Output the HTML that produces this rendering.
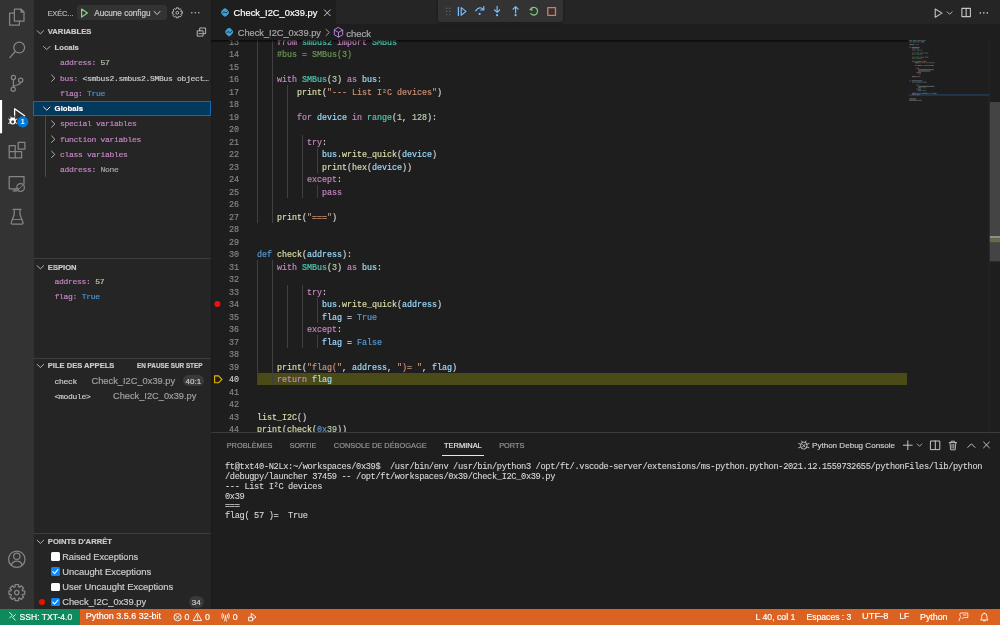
<!DOCTYPE html><html><head><meta charset="utf-8"><style>
*{margin:0;padding:0;box-sizing:border-box}
html,body{width:1000px;height:625px;overflow:hidden;background:#1e1e1e;font-family:"Liberation Sans",sans-serif;color:#ccc}
.a{position:absolute;white-space:pre;-webkit-text-stroke:0.18px currentColor}
.m{font-family:"Liberation Mono",monospace}
.k{color:#c586c0}.d{color:#569cd6}.f{color:#dcdcaa}.v{color:#9cdcfe}.c{color:#4ec9b0}.n{color:#b5cea8}.s{color:#ce9178}.cm{color:#6a9955}.p{color:#d4d4d4}
svg{position:absolute;overflow:visible}
</style></head><body><div id="w" style="position:absolute;left:0;top:0;width:1000px;height:625px;will-change:transform">
<div class="a" style="left:0px;top:0px;width:33.6px;height:609.3px;background:#333333;"></div>
<div class="a" style="left:33.6px;top:0px;width:177.5px;height:609.3px;background:#252526;"></div>
<div class="a" style="left:211.1px;top:0px;width:788.9px;height:24.3px;background:#252526;"></div>
<div class="a" style="left:211.1px;top:0px;width:125.4px;height:24.3px;background:#1e1e1e;"></div>
<div class="a" style="left:211.1px;top:24.3px;width:788.9px;height:15.3px;background:#1e1e1e;"></div>
<div class="a" style="left:211.1px;top:39.6px;width:788.9px;height:392.7px;background:#1e1e1e;"></div>
<div class="a" style="left:211.1px;top:431.8px;width:788.9px;height:1px;background:#3c3c3c;"></div>
<div class="a" style="left:211.3px;top:0px;width:1.2px;height:609.3px;background:rgba(0,0,0,0.12);z-index:4"></div>
<div class="a" style="left:211.1px;top:433.3px;width:788.9px;height:176px;background:#1e1e1e;"></div>
<div class="a" style="left:0px;top:609.3px;width:1000px;height:15.7px;background:#dc6222;"></div>
<div class="a" style="left:0px;top:609.3px;width:80.1px;height:15.7px;background:#0f8a5c;"></div>
<div class="a" style="left:438px;top:-2px;width:125.2px;height:24.1px;background:#333333;border-radius:0 0 3px 3px;box-shadow:0 1px 3px rgba(0,0,0,0.35);z-index:5"></div>
<div class="a" style="left:211.1px;top:39.6px;width:697px;height:392.7px;overflow:hidden">
<div class="a" style="left:45.900000000000006px;top:333.35px;width:649.7px;height:12.5px;background:#4b4b18"></div>
<div class="a" style="left:46.40px;top:-4.15px;width:1px;height:187.5px;background:#404040"></div>
<div class="a" style="left:61.40px;top:-4.15px;width:1px;height:187.5px;background:#404040"></div>
<div class="a" style="left:76.40px;top:45.85px;width:1px;height:112.5px;background:#404040"></div>
<div class="a" style="left:91.40px;top:95.85px;width:1px;height:62.5px;background:#404040"></div>
<div class="a" style="left:106.40px;top:108.35px;width:1px;height:25.0px;background:#404040"></div>
<div class="a" style="left:106.40px;top:145.85px;width:1px;height:12.5px;background:#404040"></div>
<div class="a" style="left:46.40px;top:220.85px;width:1px;height:125.0px;background:#404040"></div>
<div class="a" style="left:61.40px;top:220.85px;width:1px;height:125.0px;background:#404040"></div>
<div class="a" style="left:76.40px;top:245.85px;width:1px;height:62.5px;background:#404040"></div>
<div class="a" style="left:91.40px;top:245.85px;width:1px;height:62.5px;background:#404040"></div>
<div class="a" style="left:106.40px;top:258.35px;width:1px;height:25.0px;background:#404040"></div>
<div class="a" style="left:106.40px;top:295.85px;width:1px;height:12.5px;background:#404040"></div>
<div class="a m" style="left:7.900000000000006px;width:20px;text-align:right;top:-2.85px;height:12.5px;line-height:12.5px;font-size:8.33px;color:#858585">13</div>
<div class="a m" style="left:65.9px;top:-2.85px;height:12.5px;line-height:12.5px;font-size:8.33px"><span class="k">from</span><span class="p"> </span><span class="c">smbus2</span><span class="p"> </span><span class="k">import</span><span class="p"> </span><span class="c">SMBus</span></div>
<div class="a m" style="left:7.900000000000006px;width:20px;text-align:right;top:9.65px;height:12.5px;line-height:12.5px;font-size:8.33px;color:#858585">14</div>
<div class="a m" style="left:65.9px;top:9.65px;height:12.5px;line-height:12.5px;font-size:8.33px"><span class="cm">#bus = SMBus(3)</span></div>
<div class="a m" style="left:7.900000000000006px;width:20px;text-align:right;top:22.15px;height:12.5px;line-height:12.5px;font-size:8.33px;color:#858585">15</div>
<div class="a m" style="left:7.900000000000006px;width:20px;text-align:right;top:34.65px;height:12.5px;line-height:12.5px;font-size:8.33px;color:#858585">16</div>
<div class="a m" style="left:65.9px;top:34.65px;height:12.5px;line-height:12.5px;font-size:8.33px"><span class="k">with</span><span class="p"> </span><span class="c">SMBus</span><span class="p">(</span><span class="n">3</span><span class="p">) </span><span class="k">as</span><span class="p"> </span><span class="v">bus</span><span class="p">:</span></div>
<div class="a m" style="left:7.900000000000006px;width:20px;text-align:right;top:47.15px;height:12.5px;line-height:12.5px;font-size:8.33px;color:#858585">17</div>
<div class="a m" style="left:85.9px;top:47.15px;height:12.5px;line-height:12.5px;font-size:8.33px"><span class="f">print</span><span class="p">(</span><span class="s">&quot;--- List I²C devices&quot;</span><span class="p">)</span></div>
<div class="a m" style="left:7.900000000000006px;width:20px;text-align:right;top:59.65px;height:12.5px;line-height:12.5px;font-size:8.33px;color:#858585">18</div>
<div class="a m" style="left:7.900000000000006px;width:20px;text-align:right;top:72.15px;height:12.5px;line-height:12.5px;font-size:8.33px;color:#858585">19</div>
<div class="a m" style="left:85.9px;top:72.15px;height:12.5px;line-height:12.5px;font-size:8.33px"><span class="k">for</span><span class="p"> </span><span class="v">device</span><span class="p"> </span><span class="k">in</span><span class="p"> </span><span class="c">range</span><span class="p">(</span><span class="n">1</span><span class="p">, </span><span class="n">128</span><span class="p">):</span></div>
<div class="a m" style="left:7.900000000000006px;width:20px;text-align:right;top:84.65px;height:12.5px;line-height:12.5px;font-size:8.33px;color:#858585">20</div>
<div class="a m" style="left:7.900000000000006px;width:20px;text-align:right;top:97.15px;height:12.5px;line-height:12.5px;font-size:8.33px;color:#858585">21</div>
<div class="a m" style="left:95.9px;top:97.15px;height:12.5px;line-height:12.5px;font-size:8.33px"><span class="k">try</span><span class="p">:</span></div>
<div class="a m" style="left:7.900000000000006px;width:20px;text-align:right;top:109.65px;height:12.5px;line-height:12.5px;font-size:8.33px;color:#858585">22</div>
<div class="a m" style="left:110.9px;top:109.65px;height:12.5px;line-height:12.5px;font-size:8.33px"><span class="v">bus</span><span class="p">.</span><span class="f">write_quick</span><span class="p">(</span><span class="v">device</span><span class="p">)</span></div>
<div class="a m" style="left:7.900000000000006px;width:20px;text-align:right;top:122.15px;height:12.5px;line-height:12.5px;font-size:8.33px;color:#858585">23</div>
<div class="a m" style="left:110.9px;top:122.15px;height:12.5px;line-height:12.5px;font-size:8.33px"><span class="f">print</span><span class="p">(</span><span class="f">hex</span><span class="p">(</span><span class="v">device</span><span class="p">))</span></div>
<div class="a m" style="left:7.900000000000006px;width:20px;text-align:right;top:134.65px;height:12.5px;line-height:12.5px;font-size:8.33px;color:#858585">24</div>
<div class="a m" style="left:95.9px;top:134.65px;height:12.5px;line-height:12.5px;font-size:8.33px"><span class="k">except</span><span class="p">:</span></div>
<div class="a m" style="left:7.900000000000006px;width:20px;text-align:right;top:147.15px;height:12.5px;line-height:12.5px;font-size:8.33px;color:#858585">25</div>
<div class="a m" style="left:110.9px;top:147.15px;height:12.5px;line-height:12.5px;font-size:8.33px"><span class="k">pass</span></div>
<div class="a m" style="left:7.900000000000006px;width:20px;text-align:right;top:159.65px;height:12.5px;line-height:12.5px;font-size:8.33px;color:#858585">26</div>
<div class="a m" style="left:7.900000000000006px;width:20px;text-align:right;top:172.15px;height:12.5px;line-height:12.5px;font-size:8.33px;color:#858585">27</div>
<div class="a m" style="left:65.9px;top:172.15px;height:12.5px;line-height:12.5px;font-size:8.33px"><span class="f">print</span><span class="p">(</span><span class="s">&quot;===&quot;</span><span class="p">)</span></div>
<div class="a m" style="left:7.900000000000006px;width:20px;text-align:right;top:184.65px;height:12.5px;line-height:12.5px;font-size:8.33px;color:#858585">28</div>
<div class="a m" style="left:7.900000000000006px;width:20px;text-align:right;top:197.15px;height:12.5px;line-height:12.5px;font-size:8.33px;color:#858585">29</div>
<div class="a m" style="left:7.900000000000006px;width:20px;text-align:right;top:209.65px;height:12.5px;line-height:12.5px;font-size:8.33px;color:#858585">30</div>
<div class="a m" style="left:45.900000000000006px;top:209.65px;height:12.5px;line-height:12.5px;font-size:8.33px"><span class="d">def</span><span class="p"> </span><span class="f">check</span><span class="p">(</span><span class="v">address</span><span class="p">):</span></div>
<div class="a m" style="left:7.900000000000006px;width:20px;text-align:right;top:222.15px;height:12.5px;line-height:12.5px;font-size:8.33px;color:#858585">31</div>
<div class="a m" style="left:65.9px;top:222.15px;height:12.5px;line-height:12.5px;font-size:8.33px"><span class="k">with</span><span class="p"> </span><span class="c">SMBus</span><span class="p">(</span><span class="n">3</span><span class="p">) </span><span class="k">as</span><span class="p"> </span><span class="v">bus</span><span class="p">:</span></div>
<div class="a m" style="left:7.900000000000006px;width:20px;text-align:right;top:234.65px;height:12.5px;line-height:12.5px;font-size:8.33px;color:#858585">32</div>
<div class="a m" style="left:7.900000000000006px;width:20px;text-align:right;top:247.15px;height:12.5px;line-height:12.5px;font-size:8.33px;color:#858585">33</div>
<div class="a m" style="left:95.9px;top:247.15px;height:12.5px;line-height:12.5px;font-size:8.33px"><span class="k">try</span><span class="p">:</span></div>
<div class="a m" style="left:7.900000000000006px;width:20px;text-align:right;top:259.65px;height:12.5px;line-height:12.5px;font-size:8.33px;color:#858585">34</div>
<div class="a m" style="left:110.9px;top:259.65px;height:12.5px;line-height:12.5px;font-size:8.33px"><span class="v">bus</span><span class="p">.</span><span class="f">write_quick</span><span class="p">(</span><span class="v">address</span><span class="p">)</span></div>
<div class="a m" style="left:7.900000000000006px;width:20px;text-align:right;top:272.15px;height:12.5px;line-height:12.5px;font-size:8.33px;color:#858585">35</div>
<div class="a m" style="left:110.9px;top:272.15px;height:12.5px;line-height:12.5px;font-size:8.33px"><span class="v">flag</span><span class="p"> = </span><span class="d">True</span></div>
<div class="a m" style="left:7.900000000000006px;width:20px;text-align:right;top:284.65px;height:12.5px;line-height:12.5px;font-size:8.33px;color:#858585">36</div>
<div class="a m" style="left:95.9px;top:284.65px;height:12.5px;line-height:12.5px;font-size:8.33px"><span class="k">except</span><span class="p">:</span></div>
<div class="a m" style="left:7.900000000000006px;width:20px;text-align:right;top:297.15px;height:12.5px;line-height:12.5px;font-size:8.33px;color:#858585">37</div>
<div class="a m" style="left:110.9px;top:297.15px;height:12.5px;line-height:12.5px;font-size:8.33px"><span class="v">flag</span><span class="p"> = </span><span class="d">False</span></div>
<div class="a m" style="left:7.900000000000006px;width:20px;text-align:right;top:309.65px;height:12.5px;line-height:12.5px;font-size:8.33px;color:#858585">38</div>
<div class="a m" style="left:7.900000000000006px;width:20px;text-align:right;top:322.15px;height:12.5px;line-height:12.5px;font-size:8.33px;color:#858585">39</div>
<div class="a m" style="left:65.9px;top:322.15px;height:12.5px;line-height:12.5px;font-size:8.33px"><span class="f">print</span><span class="p">(</span><span class="s">&quot;flag(&quot;</span><span class="p">, </span><span class="v">address</span><span class="p">, </span><span class="s">&quot;)= &quot;</span><span class="p">, </span><span class="v">flag</span><span class="p">)</span></div>
<div class="a m" style="left:7.900000000000006px;width:20px;text-align:right;top:334.65px;height:12.5px;line-height:12.5px;font-size:8.33px;color:#c6c6c6">40</div>
<div class="a m" style="left:65.9px;top:334.65px;height:12.5px;line-height:12.5px;font-size:8.33px"><span class="k">return</span><span class="p"> </span><span class="v">flag</span></div>
<div class="a m" style="left:7.900000000000006px;width:20px;text-align:right;top:347.15px;height:12.5px;line-height:12.5px;font-size:8.33px;color:#858585">41</div>
<div class="a m" style="left:7.900000000000006px;width:20px;text-align:right;top:359.65px;height:12.5px;line-height:12.5px;font-size:8.33px;color:#858585">42</div>
<div class="a m" style="left:7.900000000000006px;width:20px;text-align:right;top:372.15px;height:12.5px;line-height:12.5px;font-size:8.33px;color:#858585">43</div>
<div class="a m" style="left:45.900000000000006px;top:372.15px;height:12.5px;line-height:12.5px;font-size:8.33px"><span class="f">list_I2C</span><span class="p">()</span></div>
<div class="a m" style="left:7.900000000000006px;width:20px;text-align:right;top:384.65px;height:12.5px;line-height:12.5px;font-size:8.33px;color:#858585">44</div>
<div class="a m" style="left:45.900000000000006px;top:384.65px;height:12.5px;line-height:12.5px;font-size:8.33px"><span class="f">print</span><span class="p">(</span><span class="f">check</span><span class="p">(</span><span class="d">0x</span><span class="n">39</span><span class="p">))</span></div>
</div>
<div class="a" style="left:211.1px;top:39.6px;width:697px;height:3px;background:linear-gradient(#000a,#0000);"></div>
<div class="a " style="left:226.7px;top:440.85px;height:10.30px;line-height:10.30px;font-size:7.36px;color:#969696;">PROBLÈMES</div>
<div class="a " style="left:289.7px;top:440.97px;height:10.05px;line-height:10.05px;font-size:7.18px;color:#969696;">SORTIE</div>
<div class="a " style="left:333.8px;top:440.82px;height:10.36px;line-height:10.36px;font-size:7.4px;color:#969696;">CONSOLE DE DÉBOGAGE</div>
<div class="a " style="left:444px;top:440.76px;height:10.47px;line-height:10.47px;font-size:7.48px;color:#e7e7e7;">TERMINAL</div>
<div class="a " style="left:499.2px;top:440.85px;height:10.30px;line-height:10.30px;font-size:7.36px;color:#969696;">PORTS</div>
<div class="a" style="left:442.2px;top:455.1px;width:42px;height:1px;background:#e7e7e7;"></div>
<div class="a m" style="left:225px;top:463.44px;height:9.72px;line-height:9.72px;font-size:8.7px;color:#d8d8d8;letter-spacing:-0.36px;-webkit-text-stroke:0.1px #d8d8d8">ft@txt40-N2Lx:~/workspaces/0x39$  /usr/bin/env /usr/bin/python3 /opt/ft/.vscode-server/extensions/ms-python.python-2021.12.1559732655/pythonFiles/lib/python</div>
<div class="a m" style="left:225px;top:473.16px;height:9.72px;line-height:9.72px;font-size:8.7px;color:#d8d8d8;letter-spacing:-0.36px;-webkit-text-stroke:0.1px #d8d8d8">/debugpy/launcher 37459 -- /opt/ft/workspaces/0x39/Check_I2C_0x39.py</div>
<div class="a m" style="left:225px;top:482.88px;height:9.72px;line-height:9.72px;font-size:8.7px;color:#d8d8d8;letter-spacing:-0.36px;-webkit-text-stroke:0.1px #d8d8d8">--- List I²C devices</div>
<div class="a m" style="left:225px;top:492.60px;height:9.72px;line-height:9.72px;font-size:8.7px;color:#d8d8d8;letter-spacing:-0.36px;-webkit-text-stroke:0.1px #d8d8d8">0x39</div>
<div class="a m" style="left:225px;top:502.32px;height:9.72px;line-height:9.72px;font-size:8.7px;color:#d8d8d8;letter-spacing:-0.36px;-webkit-text-stroke:0.1px #d8d8d8">===</div>
<div class="a m" style="left:225px;top:512.04px;height:9.72px;line-height:9.72px;font-size:8.7px;color:#d8d8d8;letter-spacing:-0.36px;-webkit-text-stroke:0.1px #d8d8d8">flag( 57 )=  True</div>
<div class="a " style="left:812px;top:440.15px;height:11.30px;line-height:11.30px;font-size:8.07px;color:#cccccc;">Python Debug Console</div>
<div class="a " style="left:47.4px;top:8.66px;height:10.28px;line-height:10.28px;font-size:7.34px;color:#bbbbbb;">EXÉC...</div>
<div class="a" style="left:77px;top:4.5px;width:89.7px;height:15.8px;background:#333333;border-radius:3px"></div>
<div class="a " style="left:94.2px;top:7.67px;height:11.45px;line-height:11.45px;font-size:8.18px;color:#cccccc;">Aucune configu</div>
<div class="a " style="left:47.8px;top:27.44px;height:10.72px;line-height:10.72px;font-size:7.66px;color:#cccccc;font-weight:bold">VARIABLES</div>
<div class="a " style="left:54.6px;top:43.13px;height:10.74px;line-height:10.74px;font-size:7.67px;color:#cccccc;font-weight:bold">Locals</div>
<div class="a m" style="left:60px;top:57.10px;height:11.20px;line-height:11.20px;font-size:8.0px;color:#ccc;letter-spacing:-0.3px"><span style="color:#c586c0">address:</span> <span style="color:#b5cea8">57</span></div>
<div class="a m" style="left:60px;top:72.60px;height:11.20px;line-height:11.20px;font-size:8.0px;color:#ccc;letter-spacing:-0.3px"><span style="color:#c586c0">bus:</span> <span style="color:#cccccc">&lt;smbus2.smbus2.SMBus object…</span></div>
<div class="a m" style="left:60px;top:87.80px;height:11.20px;line-height:11.20px;font-size:8.0px;color:#ccc;letter-spacing:-0.3px"><span style="color:#c586c0">flag:</span> <span style="color:#4e94ce">True</span></div>
<div class="a" style="left:33.3px;top:101px;width:177.8px;height:15.3px;background:#04395e;border:1px solid #0a6cb8"></div>
<div class="a " style="left:54.6px;top:103.76px;height:10.88px;line-height:10.88px;font-size:7.77px;color:#ffffff;font-weight:bold">Globals</div>
<div class="a m" style="left:60px;top:118.40px;height:11.20px;line-height:11.20px;font-size:8.0px;color:#ccc;letter-spacing:-0.3px"><span style="color:#c586c0">special variables</span></div>
<div class="a m" style="left:60px;top:133.60px;height:11.20px;line-height:11.20px;font-size:8.0px;color:#ccc;letter-spacing:-0.3px"><span style="color:#c586c0">function variables</span></div>
<div class="a m" style="left:60px;top:148.80px;height:11.20px;line-height:11.20px;font-size:8.0px;color:#ccc;letter-spacing:-0.3px"><span style="color:#c586c0">class variables</span></div>
<div class="a m" style="left:60px;top:164.10px;height:11.20px;line-height:11.20px;font-size:8.0px;color:#ccc;letter-spacing:-0.3px"><span style="color:#c586c0">address:</span> <span style="color:#a6a6a6">None</span></div>
<div class="a" style="left:33.3px;top:258.1px;width:177.8px;height:1px;background:#3c3c3c;"></div>
<div class="a " style="left:47.8px;top:262.55px;height:10.70px;line-height:10.70px;font-size:7.64px;color:#cccccc;font-weight:bold">ESPION</div>
<div class="a m" style="left:54.6px;top:276.10px;height:11.20px;line-height:11.20px;font-size:8.0px;color:#ccc;letter-spacing:-0.3px"><span style="color:#c586c0">address:</span> <span style="color:#b5cea8">57</span></div>
<div class="a m" style="left:54.6px;top:291.00px;height:11.20px;line-height:11.20px;font-size:8.0px;color:#ccc;letter-spacing:-0.3px"><span style="color:#c586c0">flag:</span> <span style="color:#4e94ce">True</span></div>
<div class="a" style="left:33.3px;top:358.1px;width:177.8px;height:1px;background:#3c3c3c;"></div>
<div class="a " style="left:47.8px;top:361.30px;height:10.60px;line-height:10.60px;font-size:7.57px;color:#cccccc;font-weight:bold">PILE DES APPELS</div>
<div class="a " style="left:137px;top:362.16px;height:8.89px;line-height:8.89px;font-size:6.35px;color:#cccccc;font-weight:bold">EN PAUSE SUR STEP</div>
<div class="a m" style="left:54.6px;top:375.50px;height:11.20px;line-height:11.20px;font-size:8.0px;color:#cccccc;letter-spacing:-0.3px">check</div>
<div class="a " style="left:91.5px;top:374.90px;height:13.01px;line-height:13.01px;font-size:9.29px;color:#a0a0a0;">Check_I2C_0x39.py</div>
<div class="a" style="left:183.3px;top:375.2px;width:20.7px;height:10.8px;background:#3a3a3a;border-radius:6px"></div>
<div class="a " style="left:185.6px;top:375.99px;height:11.23px;line-height:11.23px;font-size:8.02px;color:#cccccc;">40:1</div>
<div class="a m" style="left:54.6px;top:390.80px;height:11.20px;line-height:11.20px;font-size:8.0px;color:#cccccc;letter-spacing:-0.3px">&lt;module&gt;</div>
<div class="a " style="left:113px;top:390.22px;height:12.96px;line-height:12.96px;font-size:9.26px;color:#a0a0a0;">Check_I2C_0x39.py</div>
<div class="a" style="left:33.3px;top:533.1px;width:177.8px;height:1px;background:#3c3c3c;"></div>
<div class="a " style="left:47.8px;top:537.05px;height:10.70px;line-height:10.70px;font-size:7.64px;color:#cccccc;font-weight:bold">POINTS D'ARRÊT</div>
<div class="a" style="left:51px;top:552.2px;width:8.6px;height:8.6px;background:#ffffff;border-radius:1.5px"></div>
<div class="a " style="left:62.2px;top:550.87px;height:12.87px;line-height:12.87px;font-size:9.19px;color:#cccccc;">Raised Exceptions</div>
<div class="a" style="left:51px;top:567.4000000000001px;width:8.6px;height:8.6px;background:#0a84ff;border-radius:1.5px"></div>
<div class="a " style="left:62.2px;top:564.71px;height:13.19px;line-height:13.19px;font-size:9.42px;color:#cccccc;">Uncaught Exceptions</div>
<div class="a" style="left:51px;top:582.6px;width:8.6px;height:8.6px;background:#ffffff;border-radius:1.5px"></div>
<div class="a " style="left:62.2px;top:581.13px;height:13.13px;line-height:13.13px;font-size:9.38px;color:#cccccc;">User Uncaught Exceptions</div>
<div class="a" style="left:51px;top:597.8000000000001px;width:8.6px;height:8.6px;background:#0a84ff;border-radius:1.5px"></div>
<div class="a " style="left:62.2px;top:596.37px;height:13.06px;line-height:13.06px;font-size:9.33px;color:#cccccc;">Check_I2C_0x39.py</div>
<div class="a" style="left:38.6px;top:598.9px;width:6.2px;height:6.2px;border-radius:50%;background:#e51400"></div>
<div class="a" style="left:188.9px;top:596.2px;width:15.1px;height:11.4px;background:#3a3a3a;border-radius:6px"></div>
<div class="a " style="left:191.7px;top:596.92px;height:11.35px;line-height:11.35px;font-size:8.11px;color:#cccccc;">34</div>
<div class="a " style="left:19.5px;top:610.69px;height:12.03px;line-height:12.03px;font-size:8.59px;color:#ffffff;">SSH: TXT-4.0</div>
<div class="a " style="left:85.8px;top:610.41px;height:12.57px;line-height:12.57px;font-size:8.98px;color:#ffffff;">Python 3.5.6 32-bit</div>
<div class="a " style="left:184.6px;top:610.54px;height:12.32px;line-height:12.32px;font-size:8.8px;color:#ffffff;">0</div>
<div class="a " style="left:205px;top:610.54px;height:12.32px;line-height:12.32px;font-size:8.8px;color:#ffffff;">0</div>
<div class="a " style="left:232.7px;top:610.54px;height:12.32px;line-height:12.32px;font-size:8.8px;color:#ffffff;">0</div>
<div class="a " style="left:755.5px;top:610.60px;height:12.21px;line-height:12.21px;font-size:8.72px;color:#ffffff;">L 40, col 1</div>
<div class="a " style="left:806.5px;top:610.67px;height:12.05px;line-height:12.05px;font-size:8.61px;color:#ffffff;">Espaces : 3</div>
<div class="a " style="left:862px;top:610.18px;height:13.03px;line-height:13.03px;font-size:9.31px;color:#ffffff;">UTF-8</div>
<div class="a " style="left:899.5px;top:610.99px;height:11.41px;line-height:11.41px;font-size:8.15px;color:#ffffff;">LF</div>
<div class="a " style="left:920px;top:610.52px;height:12.36px;line-height:12.36px;font-size:8.83px;color:#ffffff;">Python</div>
<div class="a " style="left:233.6px;top:6.88px;height:13.03px;line-height:13.03px;font-size:9.31px;color:#ffffff;">Check_I2C_0x39.py</div>
<div class="a " style="left:237.8px;top:26.83px;height:12.94px;line-height:12.94px;font-size:9.24px;color:#a9a9a9;">Check_I2C_0x39.py</div>
<div class="a " style="left:346.2px;top:26.61px;height:13.38px;line-height:13.38px;font-size:9.56px;color:#a9a9a9;">check</div>
<svg class="a" style="left:0;top:0;z-index:6" width="1000" height="625" viewBox="0 0 1000 625"><path d="M14.4 9.2 H21.2 L24 12 V21.2 H14.4 Z M21 9.2 V12.2 H24" stroke="#858585" stroke-width="1.25" fill="none" stroke-linecap="round" stroke-linejoin="round" /><path d="M14.4 13 H9.6 V25 H19.4 V21.2" stroke="#858585" stroke-width="1.25" fill="none" stroke-linecap="round" stroke-linejoin="round" /><circle cx="19.2" cy="47.6" r="5.4" stroke="#858585" stroke-width="1.25" fill="none"/><path d="M15.3 51.5 L9.8 57.6" stroke="#858585" stroke-width="1.3" fill="none" stroke-linecap="round" stroke-linejoin="round" /><circle cx="13.4" cy="77.4" r="2.1" stroke="#858585" stroke-width="1.25" fill="none"/><circle cx="20.7" cy="80.2" r="2.1" stroke="#858585" stroke-width="1.25" fill="none"/><circle cx="13.2" cy="89.3" r="2.1" stroke="#858585" stroke-width="1.25" fill="none"/><path d="M13.4 79.5 V87.2" stroke="#858585" stroke-width="1.25" fill="none" stroke-linecap="round" stroke-linejoin="round" /><path d="M20.7 82.3 C20.7 85.5 14 84.5 13.4 87" stroke="#858585" stroke-width="1.25" fill="none" stroke-linecap="round" stroke-linejoin="round" /><rect x="0" y="100" width="2.1" height="33.3" fill="#ffffff"/><path d="M14.6 108.8 V115.2 M14.6 108.8 L24.6 115.8" stroke="#ffffff" stroke-width="1.3" fill="none" stroke-linecap="round" stroke-linejoin="round" /><ellipse cx="12.7" cy="121" rx="3.2" ry="3.6" fill="#fff"/><path d="M8.6 119 L10 120 M8.6 123.5 L10 122.5 M16.9 119 L15.5 120 M16.9 123.5 L15.5 122.5 M10.5 116.8 L11.5 118 M14.9 116.8 L13.9 118" stroke="#ffffff" stroke-width="0.9" fill="none" stroke-linecap="round" stroke-linejoin="round" /><ellipse cx="12.7" cy="121.8" rx="1.4" ry="1.6" fill="#333"/><circle cx="22.75" cy="121.9" r="5.6" stroke="none" stroke-width="1.25" fill="#0078d4"/><text x="22.75" y="124.4" font-family="Liberation Sans" font-size="7" font-weight="bold" fill="#fff" text-anchor="middle">1</text><path d="M9.2 145.5 H15.2 V151.6 H21.6 V157.9 H9.2 Z M9.2 151.6 H15.2 V157.9" stroke="#858585" stroke-width="1.25" fill="none" stroke-linecap="round" stroke-linejoin="round" /><path d="M18.2 142.3 H24.9 V149 H18.2 Z" stroke="#858585" stroke-width="1.25" fill="none" stroke-linecap="round" stroke-linejoin="round" /><path d="M18.8 188.8 H9.2 V176.6 H24 V184" stroke="#858585" stroke-width="1.25" fill="none" stroke-linecap="round" stroke-linejoin="round" /><path d="M13 190.8 H17.2 M15 188.8 V190.8" stroke="#858585" stroke-width="1.25" fill="none" stroke-linecap="round" stroke-linejoin="round" /><circle cx="20.6" cy="187.5" r="3.8" stroke="#858585" stroke-width="1.25" fill="none"/><path d="M18.6 189.4 L22.6 185.6" stroke="#858585" stroke-width="0.9" fill="none" stroke-linecap="round" stroke-linejoin="round" /><path d="M13.2 209.4 H21 M14.2 209.4 V214.5 L11.2 222.6 Q10.8 224 12.3 224 H21.9 Q23.4 224 23 222.6 L20 214.5 V209.4" stroke="#858585" stroke-width="1.25" fill="none" stroke-linecap="round" stroke-linejoin="round" /><path d="M12.3 219.5 H21.9" stroke="#858585" stroke-width="0.9" fill="none" stroke-linecap="round" stroke-linejoin="round" /><circle cx="16.8" cy="559.2" r="8.2" stroke="#858585" stroke-width="1.25" fill="none"/><circle cx="16.8" cy="556.2" r="3.2" stroke="#858585" stroke-width="1.25" fill="none"/><path d="M11.3 565.2 Q12.5 561.2 16.8 561.2 Q21.1 561.2 22.3 565.2" stroke="#858585" stroke-width="1.25" fill="none" stroke-linecap="round" stroke-linejoin="round" /><path d="M24.70 590.83 L24.70 594.37 L22.53 594.37 L22.11 595.40 L23.64 596.94 L21.14 599.44 L19.60 597.91 L18.57 598.33 L18.57 600.50 L15.03 600.50 L15.03 598.33 L14.00 597.91 L12.46 599.44 L9.96 596.94 L11.49 595.40 L11.07 594.37 L8.90 594.37 L8.90 590.83 L11.07 590.83 L11.49 589.80 L9.96 588.26 L12.46 585.76 L14.00 587.29 L15.03 586.87 L15.03 584.70 L18.57 584.70 L18.57 586.87 L19.60 587.29 L21.14 585.76 L23.64 588.26 L22.11 589.80 L22.53 590.83 Z" stroke="#858585" stroke-width="1.25" fill="none" stroke-linecap="round" stroke-linejoin="round" /><circle cx="16.8" cy="592.6" r="2.2" stroke="#858585" stroke-width="1.25" fill="none"/><path d="M81.6 9 L87.4 13 L81.6 17.1 Z" stroke="#89d185" stroke-width="1.2" fill="none" stroke-linecap="round" stroke-linejoin="round" /><path d="M154.2 11.4 L157.1 14.6 L160 11.4" stroke="#cccccc" stroke-width="1" fill="none" stroke-linecap="round" stroke-linejoin="round" /><path d="M182.30 11.79 L182.30 13.81 L181.05 13.88 L180.71 14.69 L181.55 15.62 L180.12 17.05 L179.19 16.21 L178.38 16.55 L178.31 17.80 L176.29 17.80 L176.22 16.55 L175.41 16.21 L174.48 17.05 L173.05 15.62 L173.89 14.69 L173.55 13.88 L172.30 13.81 L172.30 11.79 L173.55 11.72 L173.89 10.91 L173.05 9.98 L174.48 8.55 L175.41 9.39 L176.22 9.05 L176.29 7.80 L178.31 7.80 L178.38 9.05 L179.19 9.39 L180.12 8.55 L181.55 9.98 L180.71 10.91 L181.05 11.72 Z" stroke="#c5c5c5" stroke-width="0.9" fill="none" stroke-linecap="round" stroke-linejoin="round" /><circle cx="177.3" cy="12.8" r="1.4" stroke="#c5c5c5" stroke-width="0.9" fill="none"/><circle cx="191.8" cy="12.8" r="0.75" stroke="none" stroke-width="1.25" fill="#c5c5c5"/><circle cx="195.3" cy="12.8" r="0.75" stroke="none" stroke-width="1.25" fill="#c5c5c5"/><circle cx="198.8" cy="12.8" r="0.75" stroke="none" stroke-width="1.25" fill="#c5c5c5"/><path d="M197.6 30.8 H203.1 V36.1 H197.6 Z M199.7 30.8 V28 H205.6 V33.7 H203.1" stroke="#c5c5c5" stroke-width="0.9" fill="none" stroke-linecap="round" stroke-linejoin="round" /><path d="M198.9 33.5 H201.8" stroke="#c5c5c5" stroke-width="0.8" fill="none" stroke-linecap="round" stroke-linejoin="round" /><path d="M37.2 30.699999999999996 L40.400000000000006 33.9 L43.6 30.699999999999996" stroke="#c5c5c5" stroke-width="0.9" fill="none" stroke-linecap="round" stroke-linejoin="round" /><path d="M43.6 46.4 L46.800000000000004 49.6 L50.0 46.4" stroke="#c5c5c5" stroke-width="0.9" fill="none" stroke-linecap="round" stroke-linejoin="round" /><path d="M43.6 107.0 L46.800000000000004 110.19999999999999 L50.0 107.0" stroke="#ffffff" stroke-width="0.9" fill="none" stroke-linecap="round" stroke-linejoin="round" /><path d="M37.2 265.7 L40.400000000000006 268.90000000000003 L43.6 265.7" stroke="#c5c5c5" stroke-width="0.9" fill="none" stroke-linecap="round" stroke-linejoin="round" /><path d="M37.2 364.4 L40.400000000000006 367.6 L43.6 364.4" stroke="#c5c5c5" stroke-width="0.9" fill="none" stroke-linecap="round" stroke-linejoin="round" /><path d="M37.2 540.1999999999999 L40.400000000000006 543.4 L43.6 540.1999999999999" stroke="#c5c5c5" stroke-width="0.9" fill="none" stroke-linecap="round" stroke-linejoin="round" /><path d="M51.6 75.0 L54.800000000000004 78.2 L51.6 81.4" stroke="#c5c5c5" stroke-width="0.9" fill="none" stroke-linecap="round" stroke-linejoin="round" /><path d="M51.6 120.8 L54.800000000000004 124 L51.6 127.2" stroke="#c5c5c5" stroke-width="0.9" fill="none" stroke-linecap="round" stroke-linejoin="round" /><path d="M51.6 136.0 L54.800000000000004 139.2 L51.6 142.39999999999998" stroke="#c5c5c5" stroke-width="0.9" fill="none" stroke-linecap="round" stroke-linejoin="round" /><path d="M51.6 151.20000000000002 L54.800000000000004 154.4 L51.6 157.6" stroke="#c5c5c5" stroke-width="0.9" fill="none" stroke-linecap="round" stroke-linejoin="round" /><rect x="45.2" y="116.3" width="0.8" height="60.5" fill="#585858"/><path d="M221 12.4 Q221 11.4 222 10.4 L224 8.5 Q225 7.800000000000001 226 8.5 L228 10.4 Q229 11.4 229 12.4 Q229 13.4 228 14.4 L226 16.3 Q225 17.0 224 16.3 L222 14.4 Q221 13.4 221 12.4 Z" fill="#3d9fcf"/><path d="M222.4 13.200000000000001 Q223.7 10.8 225 12.4 Q226.3 14.0 227.6 11.6" stroke="#1e1e1e" stroke-width="0.8" fill="none" stroke-linecap="round" stroke-linejoin="round" /><path d="M225.1 32.1 Q225.1 31.1 226.1 30.1 L228.1 28.200000000000003 Q229.1 27.5 230.1 28.200000000000003 L232.1 30.1 Q233.1 31.1 233.1 32.1 Q233.1 33.1 232.1 34.1 L230.1 36.0 Q229.1 36.7 228.1 36.0 L226.1 34.1 Q225.1 33.1 225.1 32.1 Z" fill="#3d9fcf"/><path d="M226.5 32.9 Q227.79999999999998 30.5 229.1 32.1 Q230.4 33.7 231.7 31.3" stroke="#1e1e1e" stroke-width="0.8" fill="none" stroke-linecap="round" stroke-linejoin="round" /><path d="M324.4 9.9 L330.3 15.8 M330.3 9.9 L324.4 15.8" stroke="#cccccc" stroke-width="1" fill="none" stroke-linecap="round" stroke-linejoin="round" /><path d="M326 29.3 L329.3 32.5 L326 35.7" stroke="#a9a9a9" stroke-width="0.9" fill="none" stroke-linecap="round" stroke-linejoin="round" /><path d="M338.5 27.6 L342.7 30 V34.8 L338.5 37.1 L334.3 34.8 V30 Z M334.3 30 L338.5 32.4 L342.7 30 M338.5 32.4 V37.1" stroke="#b180d7" stroke-width="1" fill="none" stroke-linecap="round" stroke-linejoin="round" /><path d="M935.2 9 L942 13.1 L935.2 17.2 Z" stroke="#c5c5c5" stroke-width="1.1" fill="none" stroke-linecap="round" stroke-linejoin="round" /><path d="M947.1 11.8 L949.6 14.3 L952.1 11.8" stroke="#c5c5c5" stroke-width="0.9" fill="none" stroke-linecap="round" stroke-linejoin="round" /><path d="M961.9 8.4 H970.4 V16.6 H961.9 Z M966.15 8.4 V16.6" stroke="#c5c5c5" stroke-width="1.1" fill="none" stroke-linecap="round" stroke-linejoin="round" /><circle cx="980.3" cy="12.9" r="0.8" stroke="none" stroke-width="1.25" fill="#c5c5c5"/><circle cx="983.8" cy="12.9" r="0.8" stroke="none" stroke-width="1.25" fill="#c5c5c5"/><circle cx="987.3" cy="12.9" r="0.8" stroke="none" stroke-width="1.25" fill="#c5c5c5"/><circle cx="217.4" cy="304.1" r="3.0" stroke="none" stroke-width="1.25" fill="#f01010"/><path d="M214.6 375.9 H218.6 L222 379.3 L218.6 382.7 H214.6 Z" stroke="#e8b800" stroke-width="1.1" fill="none" stroke-linecap="round" stroke-linejoin="round" /><circle cx="446.6" cy="8.2" r="0.7" stroke="none" stroke-width="1.25" fill="#6a6a6a"/><circle cx="446.6" cy="11.4" r="0.7" stroke="none" stroke-width="1.25" fill="#6a6a6a"/><circle cx="446.6" cy="14.6" r="0.7" stroke="none" stroke-width="1.25" fill="#6a6a6a"/><circle cx="449.9" cy="8.2" r="0.7" stroke="none" stroke-width="1.25" fill="#6a6a6a"/><circle cx="449.9" cy="11.4" r="0.7" stroke="none" stroke-width="1.25" fill="#6a6a6a"/><circle cx="449.9" cy="14.6" r="0.7" stroke="none" stroke-width="1.25" fill="#6a6a6a"/><path d="M458.4 7.4 V15.4" stroke="#75beff" stroke-width="1.3" fill="none" stroke-linecap="round" stroke-linejoin="round" /><path d="M461.2 7.6 L466 11.4 L461.2 15.2 Z" stroke="#75beff" stroke-width="1.2" fill="none" stroke-linecap="round" stroke-linejoin="round" /><path d="M475.6 10.8 Q479.6 5.4 483.6 9.6 M483.8 6.6 V10 H480.6" stroke="#75beff" stroke-width="1.2" fill="none" stroke-linecap="round" stroke-linejoin="round" /><circle cx="479.6" cy="13.9" r="1.1" stroke="none" stroke-width="1.25" fill="#75beff"/><path d="M497.1 6.4 V12.2 M494.6 10 L497.1 12.4 L499.6 10" stroke="#75beff" stroke-width="1.2" fill="none" stroke-linecap="round" stroke-linejoin="round" /><circle cx="497.1" cy="15.2" r="1.1" stroke="none" stroke-width="1.25" fill="#75beff"/><path d="M515.6 13 V7 M513.1 9.2 L515.6 6.6 L518.1 9.2" stroke="#75beff" stroke-width="1.2" fill="none" stroke-linecap="round" stroke-linejoin="round" /><circle cx="515.6" cy="15.2" r="1.1" stroke="none" stroke-width="1.25" fill="#75beff"/><path d="M531.3 8.3 A3.8 3.8 0 1 1 530.8 13.6" stroke="#7cc47c" stroke-width="1.3" fill="none" stroke-linecap="round" stroke-linejoin="round" /><path d="M529.0 9.6 L532.4 7.2 L532.4 11.2 Z" fill="#7cc47c"/><path d="M547.8 7.6 H555.5 V15.3 H547.8 Z" stroke="#e27561" stroke-width="1.3" fill="none" stroke-linecap="round" stroke-linejoin="round" /><ellipse cx="803.8" cy="445.6" rx="3.2" ry="3.6" fill="none" stroke="#c5c5c5" stroke-width="0.9"/><path d="M798.6 443.5 L800.6 444.3 M798.6 447.8 L800.6 447 M809 443.5 L807 444.3 M809 447.8 L807 447 M801.6 441 L802.4 442.2 M806 441 L805.2 442.2 M802.3 444.2 L805.3 447.2 M805.3 444.2 L802.3 447.2" stroke="#c5c5c5" stroke-width="0.9" fill="none" stroke-linecap="round" stroke-linejoin="round" /><path d="M907.8 440.8 V449.6 M903.4 445.2 H912.2" stroke="#c5c5c5" stroke-width="1" fill="none" stroke-linecap="round" stroke-linejoin="round" /><path d="M917.2 444 L919.5 446.3 L921.8 444" stroke="#c5c5c5" stroke-width="0.8" fill="none" stroke-linecap="round" stroke-linejoin="round" /><path d="M930.8 441 H939.8 V449.6 H930.8 Z M935.3 441 V449.6" stroke="#c5c5c5" stroke-width="1" fill="none" stroke-linecap="round" stroke-linejoin="round" /><path d="M949.2 442.6 H956.6 M951.2 442.6 V441.2 H954.6 V442.6 M950 442.6 L950.6 449.8 H955.2 L955.8 442.6 M952 444.4 V448.2 M953.8 444.4 V448.2" stroke="#c5c5c5" stroke-width="0.9" fill="none" stroke-linecap="round" stroke-linejoin="round" /><path d="M967.8 447.4 L971.4 443.8 L975 447.4" stroke="#c5c5c5" stroke-width="1" fill="none" stroke-linecap="round" stroke-linejoin="round" /><path d="M983.6 442 L989.4 447.8 M989.4 442 L983.6 447.8" stroke="#c5c5c5" stroke-width="1" fill="none" stroke-linecap="round" stroke-linejoin="round" /><path d="M52.8 571.7 L54.6 573.6 L57.9 569.7" stroke="#ffffff" stroke-width="1.1" fill="none" stroke-linecap="round" stroke-linejoin="round" /><path d="M52.8 602.1 L54.6 604.0 L57.9 600.1" stroke="#ffffff" stroke-width="1.1" fill="none" stroke-linecap="round" stroke-linejoin="round" /><path d="M9.6 612.4 L12.4 615.2 L9.6 618 M15.4 614.6 L12.6 617.4 L15.4 620.2" stroke="#ffffff" stroke-width="0.9" fill="none" stroke-linecap="round" stroke-linejoin="round" /><circle cx="177.6" cy="617.2" r="3.6" stroke="#ffffff" stroke-width="0.9" fill="none"/><path d="M176 615.6 L179.2 618.8 M179.2 615.6 L176 618.8" stroke="#ffffff" stroke-width="0.8" fill="none" stroke-linecap="round" stroke-linejoin="round" /><path d="M197.6 613.4 L201.6 620.6 H193.6 Z M197.6 615.8 V618 M197.6 619.2 V619.4" stroke="#ffffff" stroke-width="0.9" fill="none" stroke-linecap="round" stroke-linejoin="round" /><path d="M225.5 616.4 L224.6 621 M225.5 616.4 L226.4 621 M222.3 613.4 Q221 616 222.3 618.6 M228.7 613.4 Q230 616 228.7 618.6 M223.6 614.6 Q223 616 223.6 617.4 M227.4 614.6 Q228 616 227.4 617.4" stroke="#ffffff" stroke-width="0.8" fill="none" stroke-linecap="round" stroke-linejoin="round" /><circle cx="225.5" cy="616" r="0.8" stroke="none" stroke-width="1.25" fill="#ffffff"/><path d="M249 617.2 H252.6 V620.8 H249 Z M251.2 617.2 V613.4 L256 617 L252.6 619.6" stroke="#ffffff" stroke-width="0.9" fill="none" stroke-linecap="round" stroke-linejoin="round" /><path d="M959 620.8 L960.6 616.6 Q958.8 614.8 960.4 613 H967.8 V617.6 H963.6 L962 618.6 M963.4 615 H966" stroke="#ffffff" stroke-width="0.8" fill="none" stroke-linecap="round" stroke-linejoin="round" /><path d="M984.3 613.2 Q981.6 613.4 981.6 616.6 V618.8 L980.6 620 H988 L987 618.8 V616.6 Q987 613.4 984.3 613.2 M983.4 620.8 H985.2" stroke="#ffffff" stroke-width="0.9" fill="none" stroke-linecap="round" stroke-linejoin="round" /><rect x="909" y="94.01" width="81" height="1.8" fill="#264f78" opacity="0.55"/><rect x="909.30" y="40.00" width="2.72" height="1" fill="#c586c0" opacity="0.38"/><rect x="912.70" y="40.00" width="4.08" height="1" fill="#4ec9b0" opacity="0.38"/><rect x="917.46" y="40.00" width="4.08" height="1" fill="#c586c0" opacity="0.38"/><rect x="922.22" y="40.00" width="3.40" height="1" fill="#4ec9b0" opacity="0.38"/><rect x="909.30" y="41.39" width="2.72" height="1" fill="#c586c0" opacity="0.38"/><rect x="912.70" y="41.39" width="2.72" height="1" fill="#9cdcfe" opacity="0.38"/><rect x="916.10" y="41.39" width="4.08" height="1" fill="#c586c0" opacity="0.38"/><rect x="920.86" y="41.39" width="3.40" height="1" fill="#dcdcaa" opacity="0.38"/><rect x="909.30" y="44.17" width="4.76" height="1" fill="#9cdcfe" opacity="0.38"/><rect x="914.74" y="44.17" width="0.68" height="1" fill="#d4d4d4" opacity="0.38"/><rect x="916.10" y="44.17" width="2.72" height="1" fill="#569cd6" opacity="0.38"/><rect x="909.30" y="46.95" width="2.04" height="1" fill="#569cd6" opacity="0.38"/><rect x="912.02" y="46.95" width="5.44" height="1" fill="#dcdcaa" opacity="0.38"/><rect x="917.46" y="46.95" width="2.04" height="1" fill="#d4d4d4" opacity="0.38"/><rect x="912.02" y="48.34" width="4.08" height="1" fill="#c586c0" opacity="0.38"/><rect x="916.78" y="48.34" width="2.04" height="1" fill="#9cdcfe" opacity="0.38"/><rect x="912.02" y="49.73" width="2.72" height="1" fill="#6a9955" opacity="0.38"/><rect x="915.42" y="49.73" width="0.68" height="1" fill="#6a9955" opacity="0.38"/><rect x="916.78" y="49.73" width="5.44" height="1" fill="#6a9955" opacity="0.38"/><rect x="912.02" y="52.51" width="2.72" height="1" fill="#c586c0" opacity="0.38"/><rect x="915.42" y="52.51" width="4.08" height="1" fill="#4ec9b0" opacity="0.38"/><rect x="920.18" y="52.51" width="4.08" height="1" fill="#c586c0" opacity="0.38"/><rect x="924.94" y="52.51" width="3.40" height="1" fill="#4ec9b0" opacity="0.38"/><rect x="912.02" y="53.90" width="2.72" height="1" fill="#6a9955" opacity="0.38"/><rect x="915.42" y="53.90" width="0.68" height="1" fill="#6a9955" opacity="0.38"/><rect x="916.78" y="53.90" width="5.44" height="1" fill="#6a9955" opacity="0.38"/><rect x="912.02" y="56.68" width="2.72" height="1" fill="#c586c0" opacity="0.38"/><rect x="915.42" y="56.68" width="4.08" height="1" fill="#4ec9b0" opacity="0.38"/><rect x="920.18" y="56.68" width="4.08" height="1" fill="#c586c0" opacity="0.38"/><rect x="924.94" y="56.68" width="3.40" height="1" fill="#4ec9b0" opacity="0.38"/><rect x="912.02" y="58.07" width="2.72" height="1" fill="#6a9955" opacity="0.38"/><rect x="915.42" y="58.07" width="0.68" height="1" fill="#6a9955" opacity="0.38"/><rect x="916.78" y="58.07" width="5.44" height="1" fill="#6a9955" opacity="0.38"/><rect x="912.02" y="60.85" width="2.72" height="1" fill="#c586c0" opacity="0.38"/><rect x="915.42" y="60.85" width="3.40" height="1" fill="#4ec9b0" opacity="0.38"/><rect x="918.82" y="60.85" width="0.68" height="1" fill="#d4d4d4" opacity="0.38"/><rect x="919.50" y="60.85" width="0.68" height="1" fill="#b5cea8" opacity="0.38"/><rect x="920.18" y="60.85" width="0.68" height="1" fill="#d4d4d4" opacity="0.38"/><rect x="921.54" y="60.85" width="1.36" height="1" fill="#c586c0" opacity="0.38"/><rect x="923.58" y="60.85" width="2.04" height="1" fill="#9cdcfe" opacity="0.38"/><rect x="925.62" y="60.85" width="0.68" height="1" fill="#d4d4d4" opacity="0.38"/><rect x="914.74" y="62.24" width="3.40" height="1" fill="#dcdcaa" opacity="0.38"/><rect x="918.14" y="62.24" width="0.68" height="1" fill="#d4d4d4" opacity="0.38"/><rect x="918.82" y="62.24" width="2.72" height="1" fill="#ce9178" opacity="0.38"/><rect x="922.22" y="62.24" width="2.72" height="1" fill="#ce9178" opacity="0.38"/><rect x="925.62" y="62.24" width="2.04" height="1" fill="#ce9178" opacity="0.38"/><rect x="928.34" y="62.24" width="5.44" height="1" fill="#ce9178" opacity="0.38"/><rect x="933.78" y="62.24" width="0.68" height="1" fill="#d4d4d4" opacity="0.38"/><rect x="914.74" y="65.02" width="2.04" height="1" fill="#c586c0" opacity="0.38"/><rect x="917.46" y="65.02" width="4.08" height="1" fill="#9cdcfe" opacity="0.38"/><rect x="922.22" y="65.02" width="1.36" height="1" fill="#c586c0" opacity="0.38"/><rect x="924.26" y="65.02" width="3.40" height="1" fill="#4ec9b0" opacity="0.38"/><rect x="927.66" y="65.02" width="0.68" height="1" fill="#d4d4d4" opacity="0.38"/><rect x="928.34" y="65.02" width="0.68" height="1" fill="#b5cea8" opacity="0.38"/><rect x="929.02" y="65.02" width="0.68" height="1" fill="#d4d4d4" opacity="0.38"/><rect x="930.38" y="65.02" width="2.04" height="1" fill="#b5cea8" opacity="0.38"/><rect x="932.42" y="65.02" width="1.36" height="1" fill="#d4d4d4" opacity="0.38"/><rect x="916.10" y="67.80" width="2.04" height="1" fill="#c586c0" opacity="0.38"/><rect x="918.14" y="67.80" width="0.68" height="1" fill="#d4d4d4" opacity="0.38"/><rect x="918.14" y="69.19" width="2.04" height="1" fill="#9cdcfe" opacity="0.38"/><rect x="920.18" y="69.19" width="0.68" height="1" fill="#d4d4d4" opacity="0.38"/><rect x="920.86" y="69.19" width="7.48" height="1" fill="#dcdcaa" opacity="0.38"/><rect x="928.34" y="69.19" width="0.68" height="1" fill="#d4d4d4" opacity="0.38"/><rect x="929.02" y="69.19" width="4.08" height="1" fill="#9cdcfe" opacity="0.38"/><rect x="933.10" y="69.19" width="0.68" height="1" fill="#d4d4d4" opacity="0.38"/><rect x="918.14" y="70.58" width="3.40" height="1" fill="#dcdcaa" opacity="0.38"/><rect x="921.54" y="70.58" width="0.68" height="1" fill="#d4d4d4" opacity="0.38"/><rect x="922.22" y="70.58" width="2.04" height="1" fill="#dcdcaa" opacity="0.38"/><rect x="924.26" y="70.58" width="0.68" height="1" fill="#d4d4d4" opacity="0.38"/><rect x="924.94" y="70.58" width="4.08" height="1" fill="#9cdcfe" opacity="0.38"/><rect x="929.02" y="70.58" width="1.36" height="1" fill="#d4d4d4" opacity="0.38"/><rect x="916.10" y="71.97" width="4.08" height="1" fill="#c586c0" opacity="0.38"/><rect x="920.18" y="71.97" width="0.68" height="1" fill="#d4d4d4" opacity="0.38"/><rect x="918.14" y="73.36" width="2.72" height="1" fill="#c586c0" opacity="0.38"/><rect x="912.02" y="76.14" width="3.40" height="1" fill="#dcdcaa" opacity="0.38"/><rect x="915.42" y="76.14" width="0.68" height="1" fill="#d4d4d4" opacity="0.38"/><rect x="916.10" y="76.14" width="3.40" height="1" fill="#ce9178" opacity="0.38"/><rect x="919.50" y="76.14" width="0.68" height="1" fill="#d4d4d4" opacity="0.38"/><rect x="909.30" y="80.31" width="2.04" height="1" fill="#569cd6" opacity="0.38"/><rect x="912.02" y="80.31" width="3.40" height="1" fill="#dcdcaa" opacity="0.38"/><rect x="915.42" y="80.31" width="0.68" height="1" fill="#d4d4d4" opacity="0.38"/><rect x="916.10" y="80.31" width="4.76" height="1" fill="#9cdcfe" opacity="0.38"/><rect x="920.86" y="80.31" width="1.36" height="1" fill="#d4d4d4" opacity="0.38"/><rect x="912.02" y="81.70" width="2.72" height="1" fill="#c586c0" opacity="0.38"/><rect x="915.42" y="81.70" width="3.40" height="1" fill="#4ec9b0" opacity="0.38"/><rect x="918.82" y="81.70" width="0.68" height="1" fill="#d4d4d4" opacity="0.38"/><rect x="919.50" y="81.70" width="0.68" height="1" fill="#b5cea8" opacity="0.38"/><rect x="920.18" y="81.70" width="0.68" height="1" fill="#d4d4d4" opacity="0.38"/><rect x="921.54" y="81.70" width="1.36" height="1" fill="#c586c0" opacity="0.38"/><rect x="923.58" y="81.70" width="2.04" height="1" fill="#9cdcfe" opacity="0.38"/><rect x="925.62" y="81.70" width="0.68" height="1" fill="#d4d4d4" opacity="0.38"/><rect x="916.10" y="84.48" width="2.04" height="1" fill="#c586c0" opacity="0.38"/><rect x="918.14" y="84.48" width="0.68" height="1" fill="#d4d4d4" opacity="0.38"/><rect x="918.14" y="85.87" width="2.04" height="1" fill="#9cdcfe" opacity="0.38"/><rect x="920.18" y="85.87" width="0.68" height="1" fill="#d4d4d4" opacity="0.38"/><rect x="920.86" y="85.87" width="7.48" height="1" fill="#dcdcaa" opacity="0.38"/><rect x="928.34" y="85.87" width="0.68" height="1" fill="#d4d4d4" opacity="0.38"/><rect x="929.02" y="85.87" width="4.76" height="1" fill="#9cdcfe" opacity="0.38"/><rect x="933.78" y="85.87" width="0.68" height="1" fill="#d4d4d4" opacity="0.38"/><rect x="918.14" y="87.26" width="2.72" height="1" fill="#9cdcfe" opacity="0.38"/><rect x="921.54" y="87.26" width="0.68" height="1" fill="#d4d4d4" opacity="0.38"/><rect x="922.90" y="87.26" width="2.72" height="1" fill="#569cd6" opacity="0.38"/><rect x="916.10" y="88.65" width="4.08" height="1" fill="#c586c0" opacity="0.38"/><rect x="920.18" y="88.65" width="0.68" height="1" fill="#d4d4d4" opacity="0.38"/><rect x="918.14" y="90.04" width="2.72" height="1" fill="#9cdcfe" opacity="0.38"/><rect x="921.54" y="90.04" width="0.68" height="1" fill="#d4d4d4" opacity="0.38"/><rect x="922.90" y="90.04" width="3.40" height="1" fill="#569cd6" opacity="0.38"/><rect x="912.02" y="92.82" width="3.40" height="1" fill="#dcdcaa" opacity="0.38"/><rect x="915.42" y="92.82" width="0.68" height="1" fill="#d4d4d4" opacity="0.38"/><rect x="916.10" y="92.82" width="4.76" height="1" fill="#ce9178" opacity="0.38"/><rect x="920.86" y="92.82" width="0.68" height="1" fill="#d4d4d4" opacity="0.38"/><rect x="922.22" y="92.82" width="4.76" height="1" fill="#9cdcfe" opacity="0.38"/><rect x="926.98" y="92.82" width="0.68" height="1" fill="#d4d4d4" opacity="0.38"/><rect x="928.34" y="92.82" width="2.04" height="1" fill="#ce9178" opacity="0.38"/><rect x="931.06" y="92.82" width="0.68" height="1" fill="#ce9178" opacity="0.38"/><rect x="931.74" y="92.82" width="0.68" height="1" fill="#d4d4d4" opacity="0.38"/><rect x="933.10" y="92.82" width="2.72" height="1" fill="#9cdcfe" opacity="0.38"/><rect x="935.82" y="92.82" width="0.68" height="1" fill="#d4d4d4" opacity="0.38"/><rect x="912.02" y="94.21" width="4.08" height="1" fill="#c586c0" opacity="0.38"/><rect x="916.78" y="94.21" width="2.72" height="1" fill="#9cdcfe" opacity="0.38"/><rect x="909.30" y="98.38" width="5.44" height="1" fill="#dcdcaa" opacity="0.38"/><rect x="914.74" y="98.38" width="1.36" height="1" fill="#d4d4d4" opacity="0.38"/><rect x="909.30" y="99.77" width="3.40" height="1" fill="#dcdcaa" opacity="0.38"/><rect x="912.70" y="99.77" width="0.68" height="1" fill="#d4d4d4" opacity="0.38"/><rect x="913.38" y="99.77" width="3.40" height="1" fill="#dcdcaa" opacity="0.38"/><rect x="916.78" y="99.77" width="0.68" height="1" fill="#d4d4d4" opacity="0.38"/><rect x="917.46" y="99.77" width="1.36" height="1" fill="#569cd6" opacity="0.38"/><rect x="918.82" y="99.77" width="1.36" height="1" fill="#b5cea8" opacity="0.38"/><rect x="920.18" y="99.77" width="1.36" height="1" fill="#d4d4d4" opacity="0.38"/><rect x="988.8" y="39.6" width="0.8" height="392.7" fill="#2a2a2a"/><rect x="989.8" y="102" width="10.2" height="159.4" fill="#444444"/><rect x="989.8" y="236.2" width="10.2" height="1.6" fill="#a0a0a0"/><rect x="989.8" y="238.2" width="10.2" height="4" fill="#6a6a40"/></svg>
</div></body></html>
